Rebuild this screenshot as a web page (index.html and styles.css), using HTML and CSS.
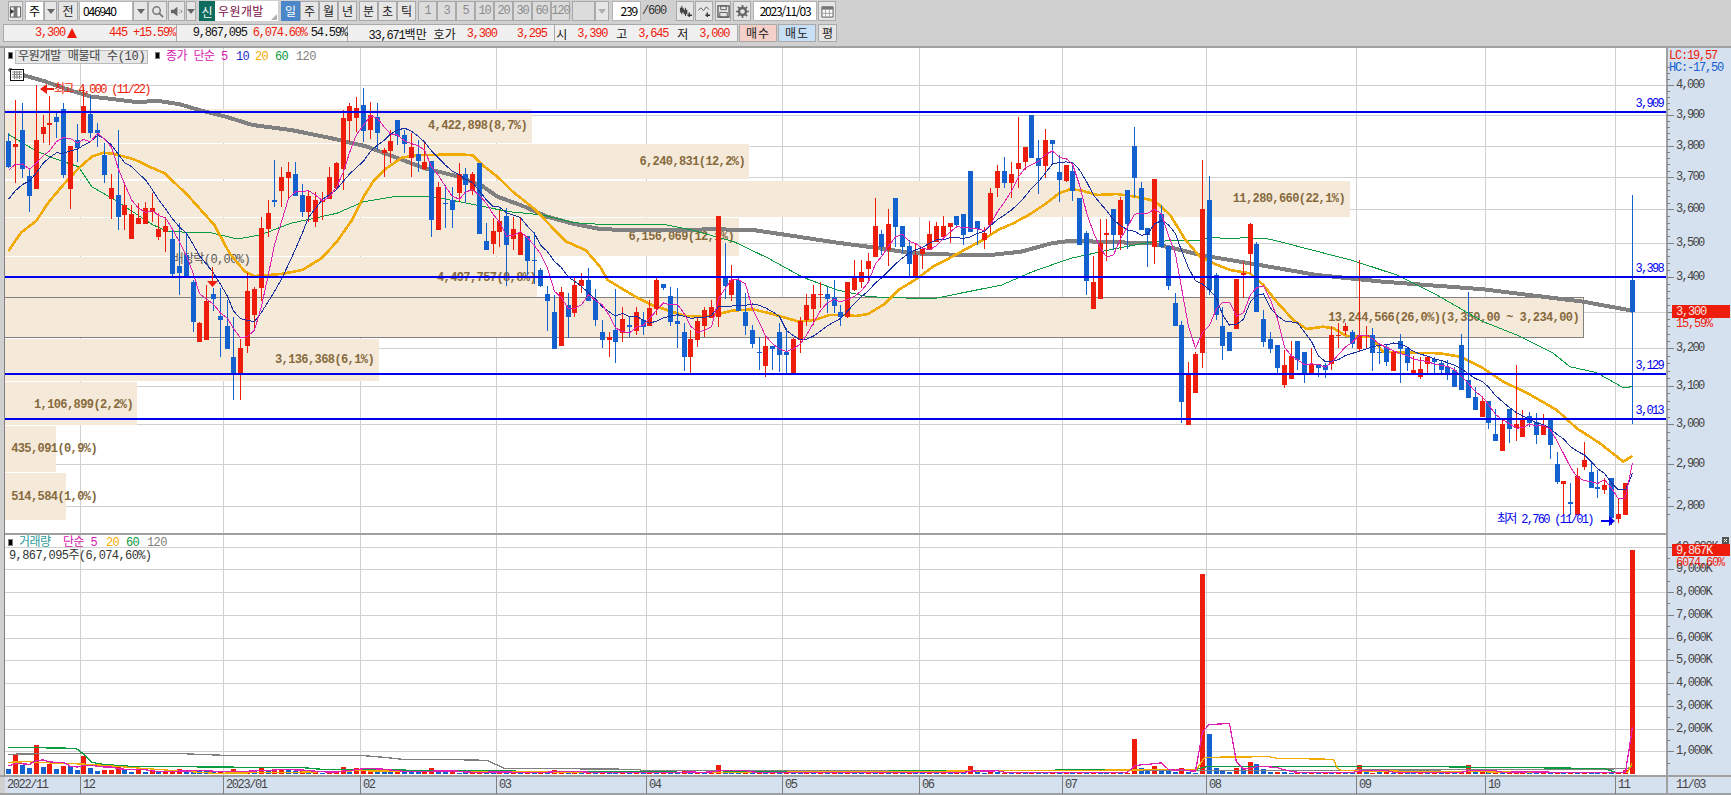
FILE: index.html
```html
<!DOCTYPE html>
<html lang="ko">
<head>
    <meta charset="UTF-8">
    <title>우원개발 일봉 차트</title>
    <link rel="stylesheet" href="styles.css">
</head>
<body>
    <div class="app">
        <div class="toolbar">
            <div class="tb-row">
                <button class="btn w15">
                    <svg class="ico" viewBox="0 0 13 14"><path d="M1 2h11v11H1z" fill="#fff" stroke="#555"/><path d="M5 2v11M8 2v11" stroke="#555"/><path d="M5 7L1 4v6z" fill="#333"/><path d="M5 2h3v11H5z" fill="#777"/></svg>
                </button>
                <div class="field w19 ml2 center">주</div>
                <button class="btn w13 caret"></button>
                <button class="btn w20 ml1">전</button>
                <div class="field w54 ml1 mono pl3">046940</div>
                <button class="btn w15 caret"></button>
                <button class="btn w19">
                    <svg class="ico" viewBox="0 0 14 14"><circle cx="6" cy="6" r="4" fill="none" stroke="#777" stroke-width="1.6"/><path d="M9 9l4 4" stroke="#777" stroke-width="2"/></svg>
                </button>
                <button class="btn w17 ml1">
                    <svg class="ico" viewBox="0 0 14 14"><path d="M1 5h3l4-3v10L4 9H1z" fill="#666"/><path d="M10 5h1v1h-1zM10 8h1v1h-1zM12 6h1v2h-1z" fill="#666"/></svg>
                </button>
                <button class="btn w10 ml1 caret"></button>
                <div class="badge ml3">신</div>
                <div class="stock-name">우원개발<i class="corner"></i></div>
                <div class="tab w19 active ml3">일</div>
                <div class="tab w19">주</div>
                <div class="tab w19">월</div>
                <div class="tab w19">년</div>
                <div class="tab w19 ml2">분</div>
                <div class="tab w19">초</div>
                <div class="tab w19">틱</div>
                <div class="tab w19 off ml2">1</div>
                <div class="tab w19 off">3</div>
                <div class="tab w19 off">5</div>
                <div class="tab w19 off">10</div>
                <div class="tab w19 off">20</div>
                <div class="tab w19 off">30</div>
                <div class="tab w19 off">60</div>
                <div class="tab w19 off">120</div>
                <div class="tab w23 off ml2"></div>
                <button class="btn w14 caret dim"></button>
                <div class="field w29 ml3 mono right">239</div>
                <div class="count mono">/600</div>
                <button class="btn w18">
                    <svg class="ico" viewBox="0 0 14 14"><path d="M3 1v9M7 3v9" stroke="#333"/><path d="M1 3h4v5H1zM5 5h4v5H5z" fill="#444"/><path d="M11 8v5M9 11h5" stroke="#333" stroke-width="1.5"/></svg>
                </button>
                <button class="btn w18 ml1">
                    <svg class="ico" viewBox="0 0 14 14"><path d="M0 6l3-3 3 3 3-4 3 3" fill="none" stroke="#555"/><path d="M10 8v5M8 11h5" stroke="#333" stroke-width="1.5"/></svg>
                </button>
                <button class="btn w16 ml2">
                    <svg class="ico" viewBox="0 0 14 14"><path d="M1 1h12v12H1z" fill="none" stroke="#555" stroke-width="1.4"/><path d="M4 1h6v4H4zM3 8h8v5H3z" fill="none" stroke="#555"/></svg>
                </button>
                <button class="btn w18 ml2">
                    <svg class="ico" viewBox="0 0 14 14"><circle cx="7" cy="7" r="3.8" fill="none" stroke="#666" stroke-width="2.6"/><path d="M7 0v3M7 11v3M0 7h3M11 7h3M2 2l2 2M10 10l2 2M12 2l-2 2M4 10l-2 2" stroke="#666" stroke-width="1.8"/></svg>
                </button>
                <div class="field w64 ml2 mono center">2023/11/03</div>
                <button class="btn w18 ml1">
                    <svg class="ico" viewBox="0 0 14 14"><path d="M1 2h12v11H1z" fill="#fff" stroke="#555"/><path d="M1 2h12v3H1z" fill="#777"/><path d="M5 5v8M9 5v8M1 9h12" stroke="#999"/></svg>
                </button>
            </div>
            <div class="tb-row quote-row">
                <div class="quotes">
                    <div class="q-group q-a up">
                        <span>3,300</span>
                        <span class="tri"></span>
                        <span>445</span>
                        <span>+15.59%</span>
                    </div>
                    <div class="q-group q-b">
                        <span>9,867,095</span>
                        <span class="up">6,074.60%</span>
                        <span>54.59%</span>
                    </div>
                    <div class="q-group q-c">
                        <span>33,671<em>백만</em></span>
                        <span><em>호가</em></span>
                        <span class="up">3,300</span>
                        <span class="up">3,295</span>
                    </div>
                    <div class="q-group q-d">
                        <span><em>시</em></span>
                        <span class="up">3,390</span>
                        <span><em>고</em></span>
                        <span class="up">3,645</span>
                        <span><em>저</em></span>
                        <span class="up">3,000</span>
                    </div>
                </div>
                <button class="order buy">매수</button>
                <button class="order sell">매도</button>
                <button class="btn w19 ml1 order-avg">평</button>
            </div>
        </div>
        <svg class="chart" id="chart" viewBox="0 46 1731 749" width="1731" height="749"></svg>
    </div>
    <script src="chart.js"></script>
</body>
</html>
```

FILE: styles.css
```css
* {
    box-sizing: border-box;
}

body {
    margin: 0;
    background-color: #d0d0d0;
    font-family: "Noto Sans CJK KR", sans-serif;
    font-size: 12px;
    color: #111111;
    overflow: hidden;
}

.app {
    display: flex;
    flex-direction: column;
    width: 1731px;
    height: 795px;
}

.toolbar {
    height: 46px;
    padding-top: 1px;
}

.tb-row {
    display: flex;
    height: 20px;
    padding-left: 8px;
}

.quote-row {
    height: 18px;
    margin-top: 3px;
    padding-left: 3px;
}

.mono {
    font-family: "Liberation Mono", monospace;
    letter-spacing: -1.2px;
}

.btn,
.tab,
.field,
.order {
    display: flex;
    align-items: center;
    justify-content: center;
    height: 100%;
    padding: 0;
    border: 1px solid #a9a9a9;
    background: #e6e6e6;
    font: inherit;
    color: #222222;
    line-height: 1;
}

.field {
    background: #ffffff;
    border-color: #b4b4b4;
    color: #000000;
}

.center { justify-content: center; }
.right { justify-content: flex-end; padding-right: 3px; }
.pl3 { justify-content: flex-start; padding-left: 3px; }

.w10 { width: 10px; }
.w13 { width: 13px; }
.w14 { width: 14px; }
.w15 { width: 15px; }
.w16 { width: 16px; }
.w17 { width: 17px; }
.w18 { width: 18px; }
.w19 { width: 19px; }
.w20 { width: 20px; }
.w23 { width: 23px; }
.w29 { width: 29px; }
.w54 { width: 54px; }
.w64 { width: 64px; }

.ml1 { margin-left: 1px; }
.ml2 { margin-left: 2px; }
.ml3 { margin-left: 3px; }

.ico {
    width: 13px;
    height: 13px;
}

.caret::after {
    content: "";
    border-left: 4px solid transparent;
    border-right: 4px solid transparent;
    border-top: 5px solid #666666;
}

.caret.dim::after {
    border-top-color: #b0b0b0;
}

.badge {
    display: flex;
    align-items: center;
    justify-content: center;
    width: 16px;
    background: #0f6b5c;
    color: #ffffff;
}

.stock-name {
    position: relative;
    width: 63px;
    padding-left: 3px;
    background: #ffffff;
    color: #7a1046;
    line-height: 20px;
    letter-spacing: 0.4px;
}

.corner {
    position: absolute;
    right: 1px;
    bottom: 1px;
    border-left: 6px solid transparent;
    border-bottom: 6px solid #b0b0b0;
}

.tab {
    font-size: 12px;
}

.tab.active {
    background: #4a86c8;
    color: #ffffff;
    border-color: #4a86c8;
}

.tab.off {
    color: #8c8c8c;
    font-family: "Liberation Mono", monospace;
    letter-spacing: -1.2px;
    background: #dcdcdc;
}

.count {
    width: 35px;
    padding-left: 1px;
    line-height: 20px;
    color: #333333;
}

.quotes {
    display: flex;
    width: 735px;
    height: 100%;
    border: 1px solid #a9a9a9;
    background: #f0f0f0;
}

.q-group {
    display: grid;
    align-items: center;
    height: 100%;
    padding-bottom: 1px;
    text-align: right;
    font-family: "Liberation Mono", monospace;
    letter-spacing: -1.2px;
    white-space: nowrap;
}

.q-group em {
    font-family: "Noto Sans CJK KR", sans-serif;
    font-style: normal;
    letter-spacing: 0;
}

.q-a {
    width: 173px;
    grid-template-columns: 61px 14px 48px 48px;
    border-right: 1px solid #a9a9a9;
}

.q-b {
    width: 171px;
    grid-template-columns: 70px 60px 40px;
    border-right: 1px solid #a9a9a9;
}

.q-c {
    width: 208px;
    grid-template-columns: 79px 29px 41px 50px;
    border-right: 1px solid #a9a9a9;
}

.q-d {
    width: 182px;
    grid-template-columns: 12px 40px 20px 41px 20px 41px;
}

.up {
    color: #f01a0a;
}

.tri {
    justify-self: center;
    width: 0;
    height: 0;
    border-left: 5px solid transparent;
    border-right: 5px solid transparent;
    border-bottom: 10px solid #f01a0a;
}

.order {
    width: 38px;
    margin-left: 1px;
    letter-spacing: 1px;
}

.buy {
    background: #f5d0c8;
}

.sell {
    background: #c8e0f5;
}

.order-avg {
    margin-left: 2px;
}

/* chart */
.chart {
    display: block;
}

.chart text {
    font-family: "Liberation Mono", "Noto Sans CJK KR", monospace;
    font-size: 12px;
    letter-spacing: -0.6px;
    white-space: pre;
}

.chart text.axis-label,
.chart text.level-label,
.chart text.high-label,
.chart text.low-label {
    letter-spacing: -1.7px;
}

.chart text.axis-label {
    fill: #444444;
}

.chart text.vol-label {
    fill: #444444;
    letter-spacing: -1.3px;
}

.chart text.date-label {
    fill: #444444;
    letter-spacing: -1.4px;
}

.chart text.band-label {
    fill: #866a3c;
    font-weight: bold;
}

.chart text.plain-label {
    fill: #555555;
}

.chart text.level-label,
.chart text.low-label {
    fill: #0000ee;
}

.chart text.high-label {
    fill: #f01a0a;
}

.chart text.lc-label,
.chart text.pct-label {
    fill: #f01a0a;
    letter-spacing: -1.2px;
}

.chart text.hc-label {
    fill: #1460d0;
    letter-spacing: -1.2px;
}

.chart text.tag-label {
    fill: #f4e4e0;
    letter-spacing: -1.2px;
}

.chart text.legend-box {
    fill: #444444;
    letter-spacing: -0.3px;
}

.chart text.k-magenta { fill: #d818b0; }
.chart text.k-blue { fill: #1a30c0; }
.chart text.k-orange { fill: #f5aa00; }
.chart text.k-green { fill: #0a9a40; }
.chart text.k-gray { fill: #808080; }
.chart text.k-teal { fill: #2a9a9a; }
.chart text.k-dark { fill: #333333; }

.grid { stroke: #d0d0d0; stroke-width: 1; }
.frame { stroke: #a0a0a0; stroke-width: 2; }
.tick { stroke: #808080; stroke-width: 1; }
.band { fill: #f5e9d9; }
.band-box { stroke: #808080; stroke-width: 1; }
.level { fill: #0000ee; }
.panel { fill: #d6e1ef; }

.ma { fill: none; stroke-linejoin: round; shape-rendering: crispEdges; }
.ma-gray { stroke: #808080; stroke-width: 4; }
.ma-orange { stroke: #f0aa00; stroke-width: 2.6; }
.ma-green { stroke: #0a9a40; stroke-width: 1; }
.ma-navy { stroke: #1830a0; stroke-width: 1; }
.ma-magenta { stroke: #e020b0; stroke-width: 1; }
.vol-gray { stroke: #808080; stroke-width: 1.3; }
.vol-orange { stroke: #f0aa00; stroke-width: 1.3; }
.vol-green { stroke: #0a9a40; stroke-width: 1.3; }
.vol-magenta { stroke: #e020b0; stroke-width: 1.3; }

.red { fill: #ee1c0a; }
.blue { fill: #1360cf; }
```

FILE: chart.js
```js
// price candles: [up(1)/down(0), high, bodyTop, bodyBottom, low]
// y values are read off at 3x and grouped by their base offset
const candleGroups = [
    { base: 50, rows: [
        [0,250,274,350,355],[1,150,283,290,400],[0,160,240,357,385],[0,355,378,437,485],[1,105,270,416,416],
        [1,195,232,252,280],[1,138,219,225,285],[0,185,201,216,265],[0,160,178,375,383],[1,288,288,416,476],
        [0,222,270,295,335],[1,110,168,249,249],[0,138,192,249,265],[0,220,240,250,290],[0,280,315,375,398],
        [1,372,415,447,506],[0,240,435,500,540],[1,396,465,495,540],[1,465,492,567,567],[1,460,503,522,522],
        [1,455,475,522,522],[1,428,475,485,515],[1,490,538,560,570],[1,500,528,545,605],[0,540,567,672,680],
        [0,520,648,668,735],[0,545,615,680,680],[0,690,696,815,845],[1,815,820,875,875],[1,705,753,870,870],
        [0,715,732,747,782],[0,715,798,810,920],[0,750,828,896,896],[0,800,922,972,1050],[1,868,895,970,1050],
        [1,670,723,887,908],[1,712,717,795,835],[1,500,534,714,752],[1,450,489,537,560],[0,330,450,456,470],
        [1,350,381,423,470],[1,335,366,384,445],[0,335,372,437,437],[0,402,435,486,500],[1,420,437,486,515],
        [1,425,450,515,530],[1,425,450,456,510],[1,350,382,447,447],[1,335,339,415,420],[1,180,205,357,420],
        [1,160,168,213,275],[1,142,174,205,245],[0,115,165,242,275],[1,155,195,240,267],[0,158,202,249,300],
        [1,295,300,310,380],[1,240,273,303,340],[0,210,210,258,285],[0,240,256,283,308],[1,250,292,323,380],
        [0,270,312,333,365],[1,275,335,357,360],[0,332,333,510,560],[1,395,410,540,540],[0,405,460,463,535],
        [0,410,450,480,535],[1,340,373,428,455],[0,355,372,405,460],[1,365,372,424,435],[0,340,340,552,552],
        [0,520,574,600,600],[1,505,543,582,612],[1,480,513,545,590],[0,475,498,585,708],[1,500,537,567,600],
        [1,505,548,615,615],[0,558,558,632,675],[0,545,630,633,703],[0,655,660,707,710],[0,707,732,752,843],
        [0,735,786,896,896],[1,712,727,887,887],[0,730,765,800,863],[1,682,705,788,800],[1,668,690,708,728],
        [0,655,690,752,752],[0,718,750,810,828]
    ]},
    { base: 90, rows: [
        [0,690,727,750,775],[1,725,742,750,800],[0,597,720,755,820],[1,650,687,728,755],[0,680,705,710,742],
        [1,650,665,723,735],[0,665,690,710,735],[1,630,654,707,707],[1,565,570,657,675],[0,582,582,595,600],
        [0,590,618,695,708],[0,595,693,702,775],[0,700,727,800,843],[1,720,747,800,850],[1,680,693,750,770],
        [1,650,660,707,742],[1,630,652,683,685],[1,378,378,680,710],[0,458,560,587,627],[1,525,570,615,632],
        [0,565,570,662,662],[0,610,665,708,735],[0,705,720,762,775],[0,740,787,789,840],[1,738,768,827,860],
        [0,770,768,776,840],[0,700,727,795,845],[0,715,785,795,850],[1,745,748,850,850],[1,680,693,750,790],
        [1,612,645,690,708],[1,585,612,657,705],[1,575,612,615,655],[0,590,612,627,670],[0,570,622,647,670],
        [0,645,665,682,708],[1,575,575,682,685],[1,510,562,600,602],[1,510,546,577,595],[1,490,513,537,570],
        [1,325,408,502,502],[0,420,432,472,495],[1,357,402,480,527],[0,325,325,410,470],[0,408,408,470,490],
        [0,450,468,522,560],[1,460,495,560,560],[1,470,478,492,537],[1,393,432,480,480],[1,395,408,455,455],
        [1,378,408,440,445],[1,400,400,410,460],[0,378,378,405,415],[0,372,372,435,465],[0,243,243,425,425],
        [0,393,393,417,465],[1,410,430,450,478],[1,295,310,405,432],[1,225,243,293,320],[0,200,243,280,295],
        [1,215,252,280,325],[1,80,218,238,295],[1,170,170,216,240],[0,75,75,203,205],[0,150,203,228,312],
        [1,118,150,228,265],[0,150,150,162,225],[0,195,245,270,335],[1,225,225,272,275],[0,215,243,303,332],
        [0,325,325,465,465],[0,422,430,573,615],[1,497,575,657,657],[1,388,460,627,627],[1,388,430,434,512],
        [0,390,357,435,480],[1,320,330,435,480],[0,300,300,402,478],[0,110,168,265,320],[0,275,293,420,420],
        [0,415,415,435,530],[1,267,267,470,522],[0,345,372,470,475],[0,468,468,587,600],[0,610,640,707,707],
        [0,693,706,935,1000],[1,815,850,1005,1005],[1,785,792,910,910]
    ]},
    { base: 240, rows: [
        [1,-240,-93,340,383],[0,-192,-120,150,165],[0,100,105,225,240],[0,200,258,317,360],[0,275,277,333,333],
        [1,117,117,266,266],[1,65,100,105,175],[1,-51,-48,42,100],[0,5,12,215,215],[0,210,237,305,320],
        [0,275,297,327,340],[0,315,315,385,400],[1,330,376,435,443],[1,303,348,417,417],[0,303,303,360,390],
        [0,336,336,402,430],[1,325,373,400,400],[0,373,373,385,410],[0,370,375,390,415],[1,258,286,372,390],
        [1,250,285,288,325],[1,248,258,272,285],[0,270,277,312,325],[1,60,286,328,335],[1,258,286,288,325],
        [0,265,286,338,392],[0,310,337,338,372],[0,315,322,365,378],[1,330,336,392,392],[0,282,303,326,428],
        [0,322,325,370,392],[1,348,390,400,402],[1,350,387,410,416],[1,350,350,372,402],[0,350,357,365,400],
        [0,360,370,390,400],[0,360,380,402,420],[0,380,390,440,440],[0,282,315,450,450],[0,156,420,473,473],
        [0,440,470,510,510],[1,475,483,530,530],[0,483,483,548,568],[0,507,582,603,603],[1,540,553,632,632],
        [0,507,507,567,608],[1,375,552,563,602],[1,510,540,590,590],[0,515,528,548,560],[0,520,545,585,613],
        [1,522,555,585,585],[0,537,537,615,656],[0,637,672,725,732],[1,723,723,731,825],[0,730,785,792,825],
        [1,685,708,825,825],[1,606,660,682,690],[0,663,696,745,745],[0,690,741,748,775],[1,715,735,750,762],
        [0,715,715,835,855],[1,775,822,836,848],[1,730,730,825,825],[0,-135,120,217,553]
    ]}
];

// volume bars in px above the baseline, + rose against the day before, - fell
const volumeHead = [
    -5,19,-9,-6,29,-7,10,-5,8,-8,-4,18,-6,-3,4,4,9,-4,-2,4,-2,3,-2,2,3,5,-3,-3,-3,-3,
    -2,2,-2,5,-2,3,-3,6,-3,5,5,-4,-3,3,-2,2,-1,2,3,7,-4,6,6,6,-3,-3,-2,3,-2,-2,
    -2,2,6,-3,-2,2,-1,-2,2,2,-2,-2
];
const volumeSpots = {
    80: 4, 99: 3, 104: 9, 105: -3, 141: 8, 142: -3,
    165: 35, 166: -6, 167: -3, 168: 8, 169: -3, 170: -3, 171: -2, 172: 6, 173: -2, 174: -1,
    175: 200, 176: -40, 177: -6, 178: -4, 179: -2, 180: 6, 181: -6, 182: 12, 183: -10, 184: -5,
    185: -2, 186: 2, 187: -2, 198: 9, 199: -3, 214: 9, 215: -2, 221: 3, 237: 4, 238: 224
};
const quietPattern = [2, -2, 1, -2, 2, -1, 2, -2, -1];

// moving average lines read off the chart, [x, y] at the zoom they were read in
const zoomLeft = { x: 0, y: 50, kx: 2.613, ky: 3 };
const zoomMid = { x: 600, y: 90, kx: 2.613, ky: 3 };
const zoomRight = { x: 1150, y: 240, kx: 3, ky: 3 };

const orangeLine = [
    [zoomLeft, [[22,603],[55,548],[95,512],[125,460],[165,405],[205,355],[240,320],[270,308],[300,312],[350,328],[400,355],[430,370],[490,435],[560,525],[600,610],[640,665],[665,678],[735,672],[790,660],[840,625],[880,575],[920,510],[950,440],[975,395],[1010,355],[1050,323],[1090,316],[1200,313],[1235,316],[1260,345],[1300,380],[1340,425],[1400,480],[1445,535],[1480,575],[1530,600],[1568,650]]],
    [zoomMid, [[20,570],[60,598],[100,625],[135,645],[175,660],[220,677],[270,681],[310,672],[345,662],[400,658],[450,672],[490,685],[520,695],[560,690],[600,675],[640,675],[670,678],[700,672],[740,645],[780,600],[830,565],[870,530],[920,500],[960,475],[1000,450],[1040,420],[1080,400],[1120,375],[1160,345],[1200,310],[1230,297],[1260,302],[1300,315],[1350,312],[1400,320],[1450,333],[1490,375],[1530,450]]],
    [zoomRight, [[150,50],[190,70],[240,90],[300,100],[340,135],[380,185],[430,240],[470,267],[520,260],[550,265],[590,288],[660,290],[700,335],[780,338],[870,340],[930,350],[1000,385],[1060,425],[1130,458],[1220,510],[1280,565],[1350,610],[1420,665],[1447,648]]]
];
const greenLine = [
    [zoomLeft, [[22,253],[90,300],[140,325],[205,350],[240,410],[300,450],[340,480],[400,525],[440,545],[550,548],[620,567],[680,555],[760,520],[880,490],[950,455],[1040,438],[1120,438],[1200,455],[1330,485],[1420,495],[1500,518],[1568,523]]],
    [zoomMid, [[100,404],[170,404],[240,420],[350,455],[440,505],[530,562],[620,600],[700,620],[800,624],[880,624],[980,601],[1050,585],[1130,545],[1230,505],[1330,480],[1420,460],[1500,450],[1568,450]]],
    [{ x: 1170, y: 150, kx: 3, ky: 3 }, [[130,262],[180,267],[220,263],[290,266],[310,270]]],
    [zoomRight, [[370,0],[610,62],[740,105],[860,165],[1000,245],[1100,285],[1210,340],[1260,380],[1340,398],[1420,443],[1447,440]]]
];
const grayLine = [
    [zoomLeft, [[22,58],[60,75],[120,95],[180,120],[240,140],[300,148],[360,157],[410,152],[470,163],[520,180],[590,200],[660,225],[760,240],[860,263],[960,290],[1040,325],[1110,355],[1200,380],[1260,408],[1300,440],[1360,465],[1430,500],[1500,522],[1568,537]]],
    [zoomMid, [[60,420],[180,420],[300,418],[400,420],[500,437],[620,458],[700,470],[820,490],[950,495],[1020,495],[1100,485],[1180,460],[1230,452],[1300,455],[1440,460],[1510,478],[1568,495]]],
    [zoomRight, [[300,70],[500,105],[700,125],[1000,148],[1300,185],[1447,212]]]
];

const volLeft = { x: 0, y: 700, kx: 2.24, ky: 3 };
const volRight = { x: 1100, y: 640, kx: 2.485, ky: 3 };
const volGreen = [
    [volLeft, [[18,142],[170,145],[185,160],[205,187],[230,193],[290,199],[480,201],[680,203],[720,208],[1095,213],[1568,217]]],
    [volRight, [[240,388],[265,380],[840,380],[945,382],[1145,384],[1255,386],[1280,397],[1310,397],[1322,375]]]
];
const volGray = [
    [volLeft, [[18,163],[150,160],[410,161],[500,166],[805,166],[860,172],[900,178],[1020,179],[1090,181],[1130,205],[1430,208],[1440,212],[1568,212]]],
    [volRight, [[240,392],[1250,388],[1310,385],[1320,382]]]
];
const volOrange = [
    [volLeft, [[18,187],[60,185],[100,188],[200,193],[300,203],[380,211],[480,220],[700,216],[800,212],[960,215],[1568,218]]],
    [volRight, [[75,390],[240,388],[260,352],[420,350],[440,355],[580,358],[590,385],[600,392],[1225,398],[1310,398],[1322,370]]]
];

const PLOT_L = 5;
const PLOT_R = 1667;
const VOL_BASE = 774;

const priceY = (p) => 85 + 1180 * Math.log(4000 / p);
const volY = (k) => VOL_BASE - k * 22.75;
const candleX = (i) => Math.round(8.4 + 6.82 * i);

const candles = [];
candleGroups.forEach((group) => {
    group.rows.forEach(([up, high, top, bottom, low]) => {
        candles.push({
            up,
            high: group.base + high / 3,
            top: group.base + top / 3,
            bottom: group.base + bottom / 3,
            low: group.base + low / 3
        });
    });
});

function volumeAt(i) {
    if (i < volumeHead.length) return volumeHead[i];
    if (volumeSpots[i] !== undefined) return volumeSpots[i];
    return quietPattern[i % quietPattern.length];
}

function toPoints(parts) {
    const pts = [];
    parts.forEach(([zoom, list]) => {
        list.forEach(([x, y]) => pts.push([zoom.x + x / zoom.kx, zoom.y + y / zoom.ky]));
    });
    return pts;
}

function movingAverage(values, period, seed) {
    const all = seed.concat(values);
    return values.map((_, i) => {
        const end = i + seed.length + 1;
        const win = all.slice(Math.max(0, end - period), end);
        const sum = win.reduce((a, b) => a + b, 0);
        return sum / win.length;
    });
}

let out = '';

function rect(x, y, w, h, cls) {
    out += `<rect x="${x}" y="${y}" width="${w}" height="${h}" class="${cls}" shape-rendering="crispEdges"/>`;
}

function line(x1, y1, x2, y2, cls) {
    out += `<line x1="${x1}" y1="${y1}" x2="${x2}" y2="${y2}" class="${cls}" shape-rendering="crispEdges"/>`;
}

function polyline(pts, cls) {
    const d = pts.map(([x, y]) => `${x.toFixed(1)},${y.toFixed(1)}`).join(' ');
    out += `<polyline points="${d}" class="ma ${cls}"/>`;
}

function text(x, y, str, cls, anchor) {
    out += `<text x="${x}" y="${y + 4}" class="${cls}" text-anchor="${anchor || 'start'}">${str}</text>`;
}

// panels
rect(0, 46, 1731, 749, 'panel');
out += '<rect x="0" y="46" width="5" height="749" fill="#d0d0d0"/>';
out += `<rect x="${PLOT_L}" y="48" width="${PLOT_R - PLOT_L}" height="728" fill="#ffffff"/>`;
line(0, 47, 1731, 47, 'frame');

// grid
const months = [80, 223, 360, 496, 646, 782, 919, 1062, 1206, 1356, 1485, 1615];
months.forEach((x) => line(x + 0.5, 48, x + 0.5, 776, 'grid'));
for (let p = 2800; p <= 4000; p += 100) {
    const y = Math.round(priceY(p)) + 0.5;
    line(PLOT_L, y, PLOT_R, y, 'grid');
}
for (let k = 1; k <= 10; k++) {
    const y = Math.round(volY(k)) + 0.5;
    line(PLOT_L, y, PLOT_R, y, 'grid');
}

// volume by price bands: [top, bottom, right, text, textEnd, textY]
const bands = [
    [109, 143, 532, '4,422,898(8,7%)', 527, 125],
    [144, 179, 749, '6,240,831(12,2%)', 745, 161],
    [181, 217, 1350, '11,280,660(22,1%)', 1345, 198],
    [218, 256, 739, '6,156,069(12,1%)', 734, 236],
    [257, 297, 537, '4,497,757(8,8%)', 536, 277],
    [339, 381, 379, '3,136,368(6,1%)', 374, 359],
    [382, 425, 137, '1,106,899(2,2%)', 133, 404],
    [426, 472, 56, '435,091(0,9%)', 97, 448],
    [473, 520, 66, '514,584(1,0%)', 97, 496]
];
bands.forEach(([top, bottom, right]) => rect(PLOT_L, top, right - PLOT_L, bottom - top, 'band'));
rect(PLOT_L, 297, 1584 - PLOT_L, 40, 'band');
line(PLOT_L, 297.5, 1584, 297.5, 'band-box');
line(PLOT_L, 337.5, 1584, 337.5, 'band-box');
line(1583.5, 297, 1583.5, 338, 'band-box');
bands.forEach(([, , , label, end, y]) => text(end, y, label, 'band-label', 'end'));
text(1579, 317, '13,244,566(26,0%)(3,350,00 ~ 3,234,00)', 'band-label', 'end');
text(250, 259, '배당락(0,00%)', 'plain-label', 'end');

// slower moving averages sit behind the candles
polyline(toPoints(grayLine), 'ma-gray');
polyline(toPoints(greenLine), 'ma-green');
polyline(toPoints(orangeLine), 'ma-orange');

// candles
candles.forEach((c, i) => {
    const x = candleX(i);
    const color = c.up ? 'red' : 'blue';
    const top = Math.round(c.top);
    const height = Math.max(1, Math.round(c.bottom) - top);
    rect(x, Math.round(c.high), 1, Math.max(1, Math.round(c.low) - Math.round(c.high)), color);
    rect(x - 2, top, 5, height, color);
});

// the short averages are worked out from the closes
const closes = candles.map((c) => (c.up ? c.top : c.bottom));
const closeSeed = [230, 230, 230, 225, 225, 175, 170, 170, 170];
const onCandles = (values) => values.map((y, i) => [candleX(i) + 0.5, y]);
polyline(onCandles(movingAverage(closes, 10, closeSeed)), 'ma-navy');
polyline(onCandles(movingAverage(closes, 5, closeSeed)), 'ma-magenta');

// support and resistance levels
[[111, '3,909', 103], [276, '3,398', 268], [373, '3,129', 365], [418, '3,013', 410]].forEach(([y, label, labelY]) => {
    rect(PLOT_L, y, 1666 - PLOT_L, 2, 'level');
    text(1663, labelY, label, 'level-label', 'end');
});

// high and low markers
text(54, 89, '최고 4,000 (11/22)', 'high-label');
out += '<path d="M40 89l7-5v4h7v2h-7v4z" class="red"/>';
text(1497, 519, '최저 2,760 (11/01)', 'low-label');
out += '<path d="M1601 520h8v-4l6 5-6 5v-4h-8z" fill="#0000ee"/>';
rect(212, 267, 1, 15, 'red');
out += '<path d="M207 281h11l-5.5 6z" class="red"/>';

// volume bars
const volumes = candles.map((_, i) => volumeAt(i));
volumes.forEach((v, i) => {
    const h = Math.abs(v);
    rect(candleX(i) - 2, VOL_BASE - h, 5, h, v > 0 ? 'red' : 'blue');
});
polyline(toPoints(volGray), 'vol-gray');
polyline(toPoints(volGreen), 'vol-green');
polyline(toPoints(volOrange), 'vol-orange');
const volHeights = volumes.map((v) => VOL_BASE - Math.abs(v));
polyline(onCandles(movingAverage(volHeights, 5, [765, 765, 765, 765])), 'vol-magenta');

// legends
rect(8, 52, 4, 6, 'tick');
out += '<rect x="15.5" y="50.5" width="132" height="13" fill="#e8e8e8" stroke="#bbbbbb"/>';
text(18, 56, '우원개발 매물대 수(10)', 'legend-box');
rect(155, 52, 4, 6, 'tick');
text(166, 56, '종가 단순 5', 'k-magenta');
text(236, 56, '10', 'k-blue');
text(255, 56, '20', 'k-orange');
text(275, 56, '60', 'k-green');
text(296, 56, '120', 'k-gray');

// small table icon on the plot
out += '<rect x="10.5" y="69.5" width="13" height="11" fill="#ffffff" stroke="#111111"/>';
out += '<path d="M12 72h10M12 74.500h10M12 77h10M14.500 71v8M17 71v8M19.500 71v8" stroke="#808080" fill="none"/>';

rect(8, 539, 4, 6, 'tick');
text(19, 542, '거래량', 'k-teal');
text(63, 542, '단순 5', 'k-magenta');
text(106, 542, '20', 'k-orange');
text(126, 542, '60', 'k-green');
text(147, 542, '120', 'k-gray');
text(9, 555, '9,867,095주(6,074,60%)', 'k-dark');

// pane separators
line(PLOT_L, 533.5, PLOT_R, 533.5, 'frame');
line(0, 776, 1731, 776, 'frame');
line(0, 794, 1731, 794, 'frame');
line(PLOT_R, 47, PLOT_R, 795, 'frame');
line(PLOT_L - 0.5, 48, PLOT_L - 0.5, 776, 'tick');

// price axis
for (let p = 2780; p <= 4060; p += 20) {
    const y = Math.round(priceY(p)) + 0.5;
    line(PLOT_R, y, PLOT_R + (p % 100 === 0 ? 7 : 3), y, 'tick');
}
for (let p = 2800; p <= 4000; p += 100) {
    const label = `${Math.floor(p / 1000)},${String(p % 1000).padStart(3, '0')}`;
    text(1676, priceY(p) - 1, label, 'axis-label');
}
text(1669, 55, 'LC:19,57', 'lc-label');
text(1669, 67, 'HC:-17,50', 'hc-label');
out += '<rect x="1672" y="305" width="58" height="13" fill="#ee1c0a"/>';
text(1676, 311, '3,300', 'tag-label');
text(1676, 323, '15,59%', 'pct-label');

// volume axis
for (let k = 0.5; k <= 10; k += 0.5) {
    const y = Math.round(volY(k)) + 0.5;
    line(PLOT_R, y, PLOT_R + (Number.isInteger(k) ? 7 : 3), y, 'tick');
}
for (let k = 1; k <= 9; k++) {
    text(1676, volY(k) - 1, `${k},000K`, 'vol-label');
}
text(1676, 546, '10,000K', 'vol-label');
out += '<rect x="1672" y="544" width="58" height="12" fill="#ee1c0a"/>';
text(1676, 550, '9,867K', 'tag-label');
text(1676, 562, '6074,60%', 'pct-label');
out += '<rect x="1722" y="537" width="7" height="7" fill="#555555"/>';
out += '<path d="M1724 539l3 3M1727 539l-3 3" stroke="#ffffff"/>';

// date axis
[[5, '2022/11', false], [81, '12', true], [224, '2023/01', true], [361, '02', true], [497, '03', true], [647, '04', true],
 [783, '05', true], [920, '06', true], [1063, '07', true], [1207, '08', true], [1357, '09', true], [1486, '10', true], [1616, '11', true]].forEach(([x, label, mark]) => {
    if (mark) line(x - 0.5, 776, x - 0.5, 794, 'tick');
    text(x + 2, 784, label, 'date-label');
});
text(1676, 784, '11/03', 'date-label');

document.getElementById('chart').innerHTML = out;
```
